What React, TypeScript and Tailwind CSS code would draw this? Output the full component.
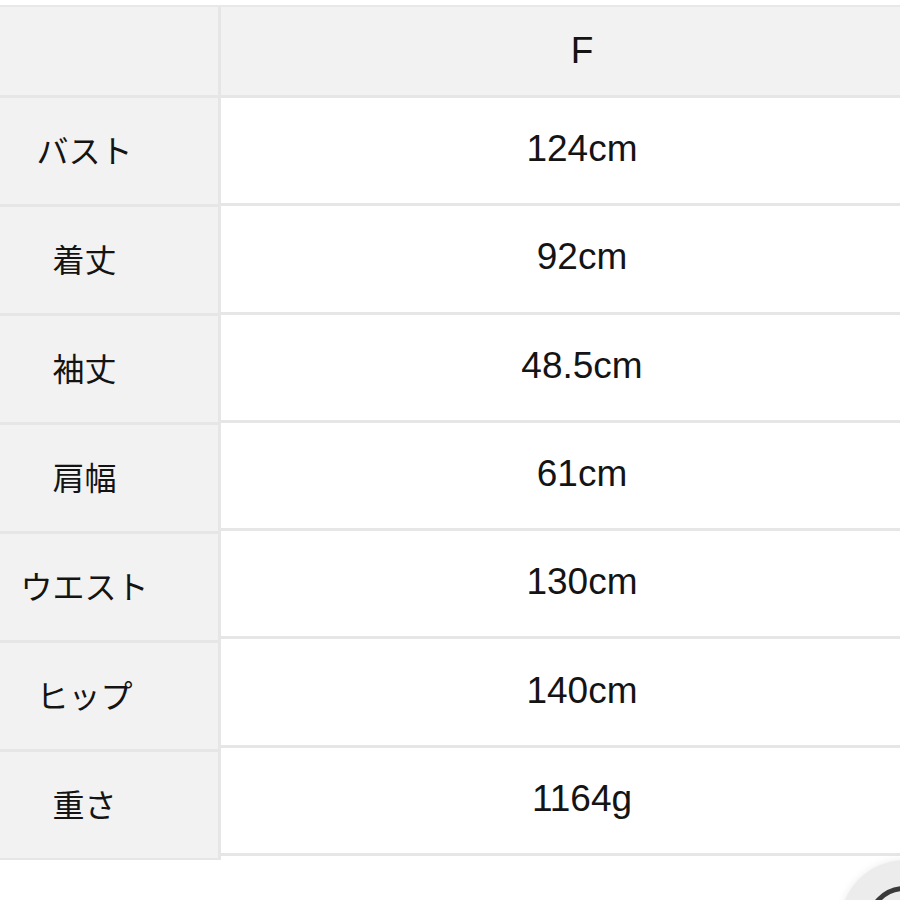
import React from 'react';

const rows = [
  { label: 'バスト', value: '124cm' },
  { label: '着丈', value: '92cm' },
  { label: '袖丈', value: '48.5cm' },
  { label: '肩幅', value: '61cm' },
  { label: 'ウエスト', value: '130cm' },
  { label: 'ヒップ', value: '140cm' },
  { label: '重さ', value: '1164g' },
];

const latin = { fontFamily: '"Liberation Sans", Arial, sans-serif' };

export default function App() {
  return (
    <div
      className="relative w-[900px] h-[900px] overflow-hidden bg-white text-[#141414] pt-[5px]"
      style={{ fontFamily: '"Noto Sans CJK JP", "Noto Sans", sans-serif' }}
    >
      <div className="flex border-t-2 border-[#e8e8e8]">
        {/* label column */}
        <div className="w-[221px] shrink-0 flex flex-col">
          <div className="h-[88px] bg-[#f2f2f2] border-r-[3px] border-[#e6e6e6]" />
          {rows.map((r) => (
            <div
              key={r.label}
              className="h-[109px] flex items-center justify-center pr-[49px] pb-[4px] bg-[#f2f2f2] border-t-[3px] border-r-[3px] border-[#e6e6e6] text-[32px] leading-none"
            >
              {r.label}
            </div>
          ))}
          <div className="h-[2px] bg-[#e6e6e6]" />
        </div>

        {/* value column */}
        <div className="flex-1 flex flex-col" style={latin}>
          <div className="h-[88px] flex items-center justify-center pl-[43px] pb-[2px] bg-[#f2f2f2] text-[37px] leading-none">
            F
          </div>
          {rows.map((r) => (
            <div
              key={r.value}
              className="h-[108.3px] flex items-center justify-center pl-[43px] pb-[4px] border-t-[3px] border-[#e6e6e6] text-[37px] leading-none"
            >
              {r.value}
            </div>
          ))}
          <div className="h-[3px] bg-[#e6e6e6]" />
        </div>
      </div>

      {/* floating button, partly off screen */}
      <div className="absolute left-[840px] top-[860px] w-[130px] h-[130px] rounded-full bg-[#ececec] shadow-[0_0_8px_rgba(0,0,0,0.08)] flex items-center justify-center">
        <div className="w-[78px] h-[78px] rounded-full border-[5px] border-[#3a3a3a]" />
      </div>
    </div>
  );
}
